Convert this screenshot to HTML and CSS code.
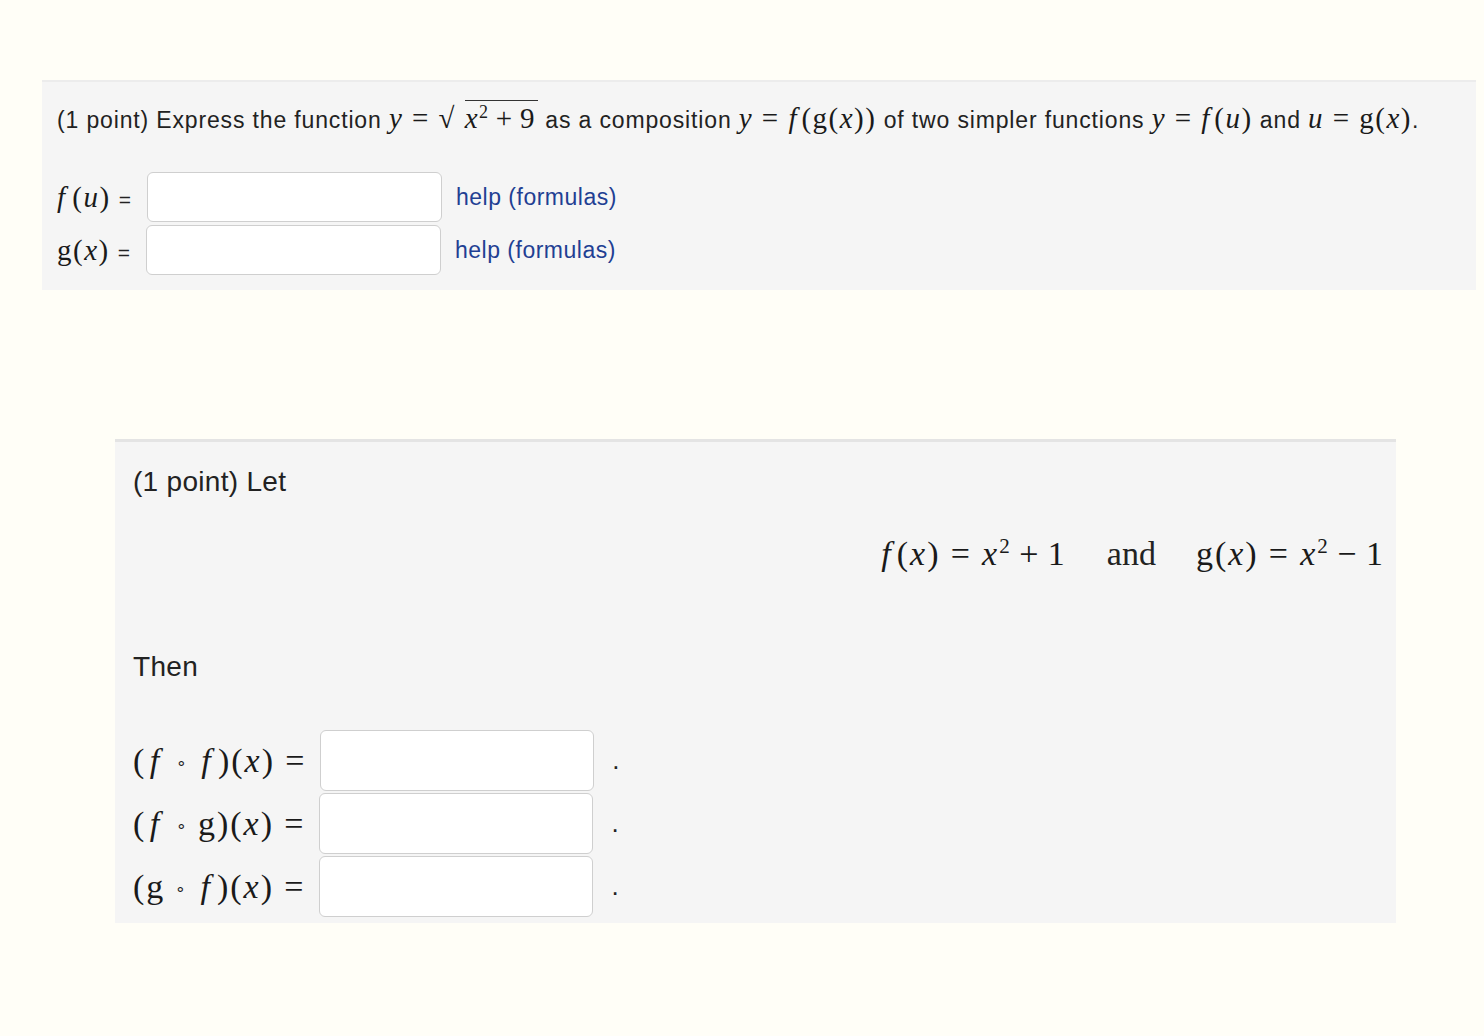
FILE: index.html
```html
<!DOCTYPE html>
<html>
<head>
<meta charset="utf-8">
<link rel="stylesheet" href="styles.css">
</head>
<body>
<div class="panel p1">
  <div class="q1">(1 point) Express the function <span class="m"><i>y</i><span class="rel">=</span><span class="rad">√</span><span class="ov"><i>x</i><sup>2</sup><span class="bin">+</span>9</span></span> as a composition <span class="m"><i>y</i><span class="rel">=</span><i class="f">f</i>(g(<i>x</i>))</span> of two simpler functions <span class="m"><i>y</i><span class="rel">=</span><i class="f">f</i>(<i>u</i>)</span> and <span class="m"><i>u</i><span class="rel">=</span>g(<i>x</i>)</span>.</div>
  <div class="rows1">
    <div class="row1">
      <span class="lab"><span class="m"><i class="f">f</i>(<i>u</i>)</span><span class="eq">=</span></span>
      <span class="inp in1"></span>
      <a class="help">help (formulas)</a>
    </div>
    <div class="row1">
      <span class="lab"><span class="m">g(<i>x</i>)</span><span class="eq">=</span></span>
      <span class="inp in1"></span>
      <a class="help">help (formulas)</a>
    </div>
  </div>
</div>

<div class="panel p2">
  <div class="q2">(1 point) Let</div>
  <div class="disp"><span class="m"><i class="f">f</i>(<i>x</i>)<span class="rel">=</span><i>x</i><sup>2</sup><span class="bin">+</span>1</span><span class="and">and</span><span class="m">g(<i>x</i>)<span class="rel">=</span><i>x</i><sup>2</sup><span class="bin">−</span>1</span></div>
  <div class="q2 then">Then</div>
  <div class="rows2">
    <div class="row2"><span class="lab2 m">(<i class="f">f</i><span class="comp">∘</span><i class="f">f</i>)(<i>x</i>)<span class="rel">=</span></span><span class="inp in2"></span><span class="dot">.</span></div>
    <div class="row2"><span class="lab2 m">(<i class="f">f</i><span class="comp">∘</span>g)(<i>x</i>)<span class="rel">=</span></span><span class="inp in2"></span><span class="dot">.</span></div>
    <div class="row2"><span class="lab2 m">(g<span class="comp">∘</span><i class="f">f</i>)(<i>x</i>)<span class="rel">=</span></span><span class="inp in2"></span><span class="dot">.</span></div>
  </div>
</div>
</body>
</html>
```

FILE: styles.css
```css
html, body {
  margin: 0;
  padding: 0;
  background: #fffef7;
  color: #222;
}
body {
  width: 1484px;
  height: 1036px;
  overflow: hidden;
  font-family: "Liberation Sans", Arial, sans-serif;
}
.panel {
  background: #f5f5f5;
  box-sizing: border-box;
}
.p1 {
  margin: 80px 0 0 42px;
  width: 1434px;
  height: 210px;
  border-top: 2px solid #ececec;
  padding: 18px 0 0 15px;
}
.q1 {
  font-size: 23px;
  letter-spacing: 0.85px;
  line-height: 36px;
  white-space: nowrap;
}
.m {
  font-family: "Liberation Serif", "Times New Roman", serif;
  letter-spacing: 1.5px;
  color: #1a1a1a;
}
.q1 .m {
  font-size: 29px;
}
.m i {
  font-style: italic;
}
.m .f {
  margin-right: 0.12em;
}
.m sup {
  font-size: 0.62em;
  line-height: 0;
  vertical-align: 0.55em;
}
.rel {
  margin: 0 0.3em;
}
.bin {
  margin: 0 0.22em;
}
.rad {
  margin-right: 0.3em;
}
.ov {
  border-top: 1.5px solid #333;
  padding-top: 1px;
  padding-right: 2px;
}
.rows1 {
  margin-top: 34px;
  display: flex;
  flex-direction: column;
  gap: 3px;
}
.row1 {
  display: flex;
  align-items: center;
  height: 50px;
}
.lab {
  display: flex;
  align-items: baseline;
  white-space: nowrap;
  margin-right: 16px;
}
.lab .m {
  font-size: 29px;
}
.lab .m .f {
  margin-right: 0.2em;
}
.eq {
  font-family: "Liberation Sans", Arial, sans-serif;
  font-size: 21px;
  margin-left: 8px;
}
.inp {
  display: block;
  background: #fff;
  border: 1.5px solid #cfcfcf;
  border-radius: 6px;
  box-sizing: border-box;
  flex: none;
}
.in1 {
  width: 295px;
  height: 50px;
}
.help {
  margin-left: 14px;
  font-size: 23px;
  letter-spacing: 0.5px;
  color: #1f3f93;
}
.p2 {
  margin: 149px 0 0 115px;
  width: 1281px;
  height: 484px;
  border-top: 3px solid #e4e4e4;
  padding: 20px 11px 0 18px;
}
.q2 {
  font-size: 28px;
  letter-spacing: 0.3px;
  line-height: 40px;
}
.disp {
  display: flex;
  justify-content: flex-end;
  margin-top: 32px;
  line-height: 40px;
  white-space: nowrap;
}
.disp .m {
  font-size: 34px;
  letter-spacing: 2px;
}
.and {
  font-family: "Liberation Serif", "Times New Roman", serif;
  font-size: 34px;
  margin: 0 40px 0 40px;
}
.then {
  margin-top: 73px;
}
.rows2 {
  margin-top: 43px;
  display: flex;
  flex-direction: column;
  gap: 2px;
}
.row2 {
  display: flex;
  align-items: center;
  height: 61px;
}
.lab2 {
  font-size: 34px;
  letter-spacing: 2px;
  white-space: nowrap;
  margin-right: 14px;
}
.lab2 .f {
  margin-left: 0.1em;
  margin-right: 0.15em;
}
.lab2 .rel {
  margin-right: 0;
}
.comp {
  font-size: 0.5em;
  vertical-align: 0.2em;
  margin: 0 0.55em;
}
.in2 {
  width: 274px;
  height: 61px;
}
.dot {
  font-size: 26px;
  margin-left: 18px;
}
```
